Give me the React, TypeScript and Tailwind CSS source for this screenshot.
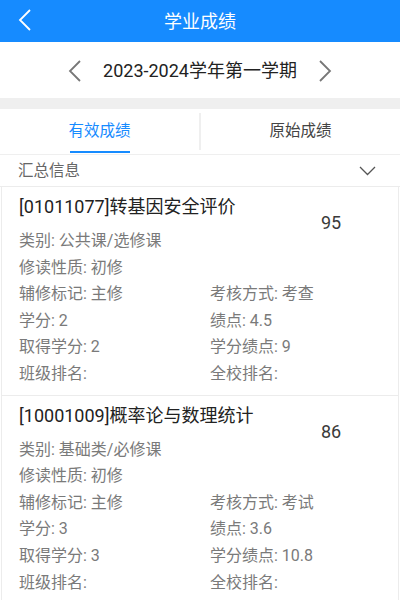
import React, { useState } from "react"

type Course = {
  code: string
  name: string
  score: string
  category: string
  nature: string
  minor: string
  exam: string
  credit: string
  gpa: string
  earned: string
  creditGpa: string
}

const courses: Course[] = [
  {
    code: "01011077",
    name: "转基因安全评价",
    score: "95",
    category: "公共课/选修课",
    nature: "初修",
    minor: "主修",
    exam: "考查",
    credit: "2",
    gpa: "4.5",
    earned: "2",
    creditGpa: "9",
  },
  {
    code: "10001009",
    name: "概率论与数理统计",
    score: "86",
    category: "基础类/必修课",
    nature: "初修",
    minor: "主修",
    exam: "考试",
    credit: "3",
    gpa: "3.6",
    earned: "3",
    creditGpa: "10.8",
  },
]

function Chevron({ dir, className }: { dir: "left" | "right"; className?: string }) {
  return (
    <svg width="13" height="22" viewBox="0 0 13 22" fill="none" className={className}>
      <polyline
        points={dir === "left" ? "12,1 2,11 12,21" : "1,1 11,11 1,21"}
        stroke="currentColor"
        strokeWidth="1.8"
        strokeLinejoin="miter"
      />
    </svg>
  )
}

function CourseCard({ c }: { c: Course }) {
  return (
    <div className="mx-px border-x border-b border-[#ececec] px-[17px] pt-[8px] pb-[7px]">
      <div className="flex items-center">
        <div className="flex-1">
          <div className="h-[24px] leading-[24px] text-[18px] text-[#222]">
            [{c.code}]{c.name}
          </div>
          <div className="mt-[9px] h-[26.6px] leading-[26.6px] text-[16px] text-[#7a7a7a]">
            类别: {c.category}
          </div>
        </div>
        <div className="w-[80px] mr-[10px] text-center text-[18px] text-[#3a3a3a] -mt-[4px]">{c.score}</div>
      </div>
      <div className="grid grid-cols-[191px_1fr] text-[16px] text-[#7a7a7a] leading-[26.6px]">
        <div className="col-span-2 h-[26.6px]">修读性质: {c.nature}</div>
        <div className="h-[26.6px]">辅修标记: {c.minor}</div>
        <div className="h-[26.6px]">考核方式: {c.exam}</div>
        <div className="h-[26.6px]">学分: {c.credit}</div>
        <div className="h-[26.6px]">绩点: {c.gpa}</div>
        <div className="h-[26.6px]">取得学分: {c.earned}</div>
        <div className="h-[26.6px]">学分绩点: {c.creditGpa}</div>
        <div className="h-[26.6px]">班级排名:</div>
        <div className="h-[26.6px]">全校排名:</div>
      </div>
    </div>
  )
}

export default function App() {
  const [tab, setTab] = useState(0)

  return (
    <div
      className="w-[400px] h-[600px] overflow-hidden bg-white"
      style={{ fontFamily: "Roboto, 'Noto Sans CJK SC', sans-serif" }}
    >
      <header className="h-[42px] bg-[#168bff] flex items-center relative">
        <Chevron dir="left" className="absolute left-[18px] top-[9px] text-white" />
        <h1 className="flex-1 text-center text-[18px] text-white">学业成绩</h1>
      </header>

      <div className="h-[56px] flex items-center justify-center gap-[22px] pt-[1px]">
        <Chevron dir="left" className="text-[#777]" />
        <span className="text-[18px] text-[#222]">2023-2024学年第一学期</span>
        <Chevron dir="right" className="text-[#777]" />
      </div>

      <div className="h-[11px] bg-[#efefef]" />

      <div className="h-[46px] flex border-b border-[#efefef]">
        {["有效成绩", "原始成绩"].map((t, i) => (
          <React.Fragment key={t}>
            {i === 1 && <div className="w-[2px] my-[4px] bg-[#efefef]" />}
            <button
              type="button"
              onClick={() => setTab(i)}
              className="flex-1 flex flex-col items-center"
            >
              <span
                className={`mt-[10px] h-[24px] leading-[24px] text-[15.5px] ${
                  tab === i ? "text-[#168bff]" : "text-[#444]"
                }`}
              >
                {t}
              </span>
              {tab === i && <span className="mt-auto mb-[1px] w-[60px] h-[2px] bg-[#168bff]" />}
            </button>
          </React.Fragment>
        ))}
      </div>

      <div className="h-[32px] flex items-center justify-between pl-[18px] pr-[24px] pt-[2px] border-b border-[#ececec]">
        <span className="text-[15.5px] text-[#666]">汇总信息</span>
        <svg width="17" height="10" viewBox="0 0 17 10" fill="none" className="text-[#555] -mt-[2px]">
          <polyline points="1,1 8.5,8.5 16,1" stroke="currentColor" strokeWidth="1.3" />
        </svg>
      </div>

      {courses.map(c => (
        <CourseCard key={c.code} c={c} />
      ))}
    </div>
  )
}
